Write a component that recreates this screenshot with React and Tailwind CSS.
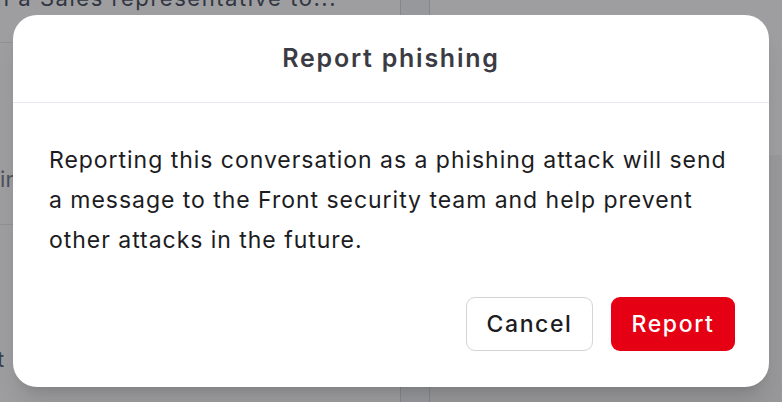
export default function App() {
  return (
    <div
      className="relative h-[402px] w-[782px] overflow-hidden bg-white"
      style={{ fontFamily: 'Inter, "Noto Sans", sans-serif' }}
    >
      {/* app behind the modal */}
      <div className="flex h-full">
        <div className="flex w-[401px] flex-col overflow-hidden border-r border-gray-300">
          <div className="h-[43px] shrink-0 border-b border-gray-200 text-[22px] leading-[22px] tracking-[0.07em] text-gray-700">
            <div className="-ml-[4px] -mt-[13px] whitespace-nowrap">n a Sales representative to...</div>
          </div>
          <div className="flex h-[182px] shrink-0 items-end border-b border-gray-200 pb-[32px] text-[22px] leading-[26px] text-gray-500">
            <span className="-ml-[52px] whitespace-nowrap">Sign in</span>
          </div>
          <div className="flex flex-1 items-end pb-[30px] text-[22px] leading-[26px] text-gray-600">
            <span className="-ml-[43px] whitespace-nowrap">Sent</span>
          </div>
        </div>
        <div className="w-[29px] border-r border-gray-300 bg-gray-100" />
        <div className="flex flex-1 flex-col">
          <div className="h-[155px] bg-white" />
          <div className="flex-1 bg-[#f4f4f5]" />
        </div>
      </div>

      {/* overlay */}
      <div className="absolute inset-0 flex items-center justify-center bg-[rgba(40,40,44,0.45)]">
        <div className="flex h-[372px] w-[756px] flex-col rounded-[24px] bg-white shadow-xl">
          <div className="flex h-[88px] shrink-0 items-center justify-center border-b border-[#e8e8ee]">
            <h2 className="text-[25px] font-semibold tracking-[0.07em] text-[#3b3b44]">Report phishing</h2>
          </div>
          <div className="flex flex-1 flex-col pl-[36px] pr-[34px] pt-[37px] pb-[36px]">
            <p className="pr-[2px] text-[23px] leading-[40px] tracking-[0.042em] text-[#1c1c22]">
              Reporting this conversation as a phishing attack will send a message to the Front security team and help prevent other attacks in the future.
            </p>
            <div className="mt-auto flex justify-end gap-[18px]">
              <button className="h-[54px] w-[127px] rounded-[9px] border border-[#d4d4d8] bg-white text-[23px] font-medium tracking-[0.07em] text-[#1c1c22]">
                Cancel
              </button>
              <button className="h-[54px] w-[124px] rounded-[9px] bg-[#e50013] text-[23px] font-medium tracking-[0.07em] text-white">
                Report
              </button>
            </div>
          </div>
        </div>
      </div>
    </div>
  );
}
